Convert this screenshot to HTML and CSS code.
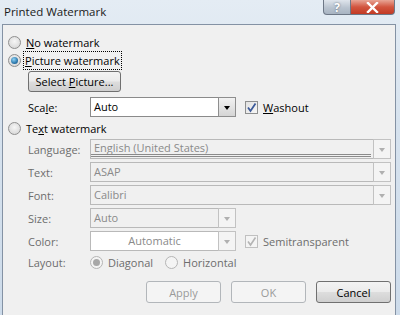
FILE: index.html
```html
<!DOCTYPE html>
<html lang="en">
<head>
    <meta charset="UTF-8">
    <title>Printed Watermark</title>
    <link rel="stylesheet" href="styles.css">
</head>
<body>
    <div class="window">
        <div class="titlebar">
            <span class="title">Printed Watermark</span>
            <div class="caption-buttons">
                <span class="cap-btn help">?</span>
                <span class="cap-btn close">
                    <svg width="13" height="11" viewBox="0 0 13 11"><path d="M2 1 L11 10 M11 1 L2 10" stroke="#fff" stroke-width="2.4" stroke-linecap="square"/></svg>
                </span>
            </div>
        </div>

        <div class="panel">
            <div class="radio-row first">
                <span class="radio"></span>
                <span><u>N</u>o watermark</span>
            </div>
            <div class="radio-row">
                <span class="radio checked"></span>
                <span class="focus"><u>P</u>icture watermark</span>
            </div>

            <div class="sub">
                <button class="btn select-btn">Select <u>P</u>icture...</button>
                <div class="scale-row">
                    <span class="label">Sca<u>l</u>e:</span>
                    <div class="combo short">
                        <span class="combo-text">Auto</span>
                        <span class="drop"><i class="arrow"></i></span>
                    </div>
                    <label class="check">
                        <span class="box on">
                            <svg width="11" height="11" viewBox="0 0 11 11"><path d="M2 5.5 L4.5 9 L9.5 1.5" fill="none" stroke="#3c5a9a" stroke-width="1.8"/></svg>
                        </span>
                        <span><u>W</u>ashout</span>
                    </label>
                </div>
            </div>

            <div class="radio-row text-radio">
                <span class="radio"></span>
                <span>Te<u>x</u>t watermark</span>
            </div>

            <div class="form">
                <span class="label dim">Language:</span>
                <div class="combo off wide lang">
                    <span class="combo-text">English (United States)</span>
                    <span class="drop"><i class="arrow"></i></span>
                </div>

                <span class="label dim">Text:</span>
                <div class="combo off wide">
                    <span class="combo-text">ASAP</span>
                    <span class="drop"><i class="arrow"></i></span>
                </div>

                <span class="label dim">Font:</span>
                <div class="combo off wide">
                    <span class="combo-text">Calibri</span>
                    <span class="drop"><i class="arrow"></i></span>
                </div>

                <span class="label dim">Size:</span>
                <div class="combo off short">
                    <span class="combo-text">Auto</span>
                    <span class="drop"><i class="arrow"></i></span>
                </div>

                <span class="label dim">Color:</span>
                <div class="color-row">
                    <div class="combo off short white">
                        <span class="combo-text center">Automatic</span>
                        <span class="drop"><i class="arrow"></i></span>
                    </div>
                    <label class="check dim">
                        <span class="box">
                            <svg width="11" height="11" viewBox="0 0 11 11"><path d="M2 5.5 L4.5 9 L9.5 1.5" fill="none" stroke="#b4b4b4" stroke-width="1.6"/></svg>
                        </span>
                        <span>Semitransparent</span>
                    </label>
                </div>

                <span class="label dim">Layout:</span>
                <div class="layout-row">
                    <span class="radio-row dim">
                        <span class="radio checked off"></span>
                        <span>Diagonal</span>
                    </span>
                    <span class="radio-row dim">
                        <span class="radio off"></span>
                        <span>Horizontal</span>
                    </span>
                </div>
            </div>

            <div class="actions">
                <button class="btn" disabled>Apply</button>
                <button class="btn" disabled>OK</button>
                <button class="btn">Cancel</button>
            </div>
        </div>
    </div>
</body>
</html>
```

FILE: styles.css
```css
body {
    margin: 0;
    width: 400px;
    height: 315px;
    overflow: hidden;
    font-family: "Open Sans", "Noto Sans", sans-serif;
    font-size: 11px;
    color: #000;
}

.window {
    width: 400px;
    height: 315px;
    background: linear-gradient(180deg, #e4ecf4 0%, #d6e2ee 40%, #cddbea 100%);
    display: flex;
    flex-direction: column;
}

.titlebar {
    height: 24px;
    flex-shrink: 0;
    display: flex;
    justify-content: space-between;
    align-items: flex-start;
}

.title {
    font-size: 11.5px;
    padding: 4px 0 0 4px;
    color: #1a1a1a;
}

.caption-buttons {
    display: flex;
    margin-right: 5px;
}

.cap-btn {
    height: 14px;
    display: flex;
    align-items: center;
    justify-content: center;
    border: 1px solid #6d7786;
    border-top: none;
}

.help {
    width: 26px;
    border-radius: 0 0 0 4px;
    background: linear-gradient(180deg, #dfe5ec 0%, #b9c3cf 55%, #a8b4c2 100%);
    color: #fff;
    font-weight: bold;
    font-size: 12px;
    text-shadow: 0 0 2px #55606e;
}

.close {
    width: 43px;
    border-left: none;
    border-radius: 0 0 4px 0;
    background: linear-gradient(180deg, #e8a596 0%, #d2553f 50%, #c23a24 100%);
}

.panel {
    height: 286px;
    flex-shrink: 0;
    margin: 0 4px 0 2px;
    background: #f0f0f0;
    border: 1px solid #8492a4;
    padding: 8px 0 0 5px;
    display: flex;
    flex-direction: column;
}

.panel > * {
    flex-shrink: 0;
}

.radio-row {
    display: flex;
    align-items: center;
    gap: 5px;
    height: 18px;
}

.radio {
    width: 11px;
    height: 11px;
    border-radius: 50%;
    border: 1px solid #8f8f8f;
    background: radial-gradient(circle at 50% 40%, #f6f6f6 0%, #dcdcdc 70%, #c9c9c9 100%);
    flex-shrink: 0;
    position: relative;
}

.radio.checked::after {
    content: "";
    position: absolute;
    left: 2px;
    top: 2px;
    width: 7px;
    height: 7px;
    border-radius: 50%;
    background: radial-gradient(circle at 40% 35%, #8fd3f6 0%, #2d79ad 60%, #1a4d78 100%);
}

.radio.off {
    border-color: #b5b5b5;
    background: #f4f4f4;
}

.radio.checked.off::after {
    background: #a8a8a8;
}

.focus {
    outline: 1px dotted #000;
    padding: 1px 1px;
    margin-left: -2px;
}

.sub {
    padding-left: 20px;
    display: flex;
    flex-direction: column;
}

.btn {
    font-family: inherit;
    font-size: 11px;
    width: 75px;
    height: 22px;
    border: 1px solid #707070;
    border-radius: 3px;
    background: linear-gradient(180deg, #f3f3f3 0%, #ebebeb 48%, #dddddd 52%, #cfcfcf 100%);
    color: #000;
    padding: 0;
}

.btn:disabled {
    border-color: #b2b6ba;
    background: #f4f4f4;
    color: #9a9a9a;
}

.select-btn {
    width: 93px;
    height: 21px;
    margin-top: 2px;
}

.scale-row {
    display: flex;
    align-items: center;
    margin-top: 4px;
    height: 22px;
}

.label {
    width: 62px;
    flex-shrink: 0;
}

.dim {
    color: #6d6d6d;
}

.combo {
    height: 20px;
    box-sizing: border-box;
    border: 1px solid #8a8a8a;
    background: #fff;
    display: flex;
    align-items: stretch;
}

.combo.short {
    width: 146px;
}

.combo.wide {
    width: 301px;
}

.combo-text {
    flex: 1;
    padding-left: 3px;
    line-height: 18px;
}

.combo-text.center {
    text-align: center;
    padding-left: 0;
}

.drop {
    width: 16px;
    border: 1px solid #8e8e8e;
    margin: -1px -1px -1px 0;
    background: linear-gradient(180deg, #f2f2f2, #d5d5d5);
    display: flex;
    align-items: center;
    justify-content: center;
}

.arrow {
    width: 0;
    height: 0;
    border-left: 3.5px solid transparent;
    border-right: 3.5px solid transparent;
    border-top: 4px solid #000;
    margin-top: 1px;
}

.combo.off {
    border-color: #b9b9b9;
    background: #f0f0f0;
    color: #8a8a8a;
}

.combo.off .drop {
    border-color: #c2c2c2;
    background: #f4f4f4;
}

.combo.off .arrow {
    border-top-color: #b0b0b0;
}

.combo.white {
    background: #fff;
}

.combo.lang .combo-text {
    border-bottom: 3px double #8a8a8a;
    margin: 0 2px 1px 0;
    line-height: 16px;
}

.check {
    display: flex;
    align-items: center;
    gap: 5px;
    margin-left: 9px;
}

.box {
    width: 11px;
    height: 11px;
    border: 1px solid #8e8f8f;
    background: linear-gradient(135deg, #e2e2e2, #f6f6f6);
    display: flex;
    align-items: center;
    justify-content: center;
}

.check.dim .box {
    border-color: #c0c0c0;
    background: #f4f4f4;
}

.text-radio {
    margin-top: 1px;
}

.form {
    display: grid;
    grid-template-columns: 62px auto;
    grid-template-rows: repeat(5, 20px) 17px;
    row-gap: 3px;
    align-items: center;
    padding-left: 20px;
    margin-top: 2px;
}

.color-row {
    display: flex;
    align-items: center;
}

.layout-row {
    display: flex;
    gap: 12px;
}

.actions {
    display: flex;
    justify-content: flex-end;
    gap: 10px;
    margin: 10px 4px 0 0;
}
```
